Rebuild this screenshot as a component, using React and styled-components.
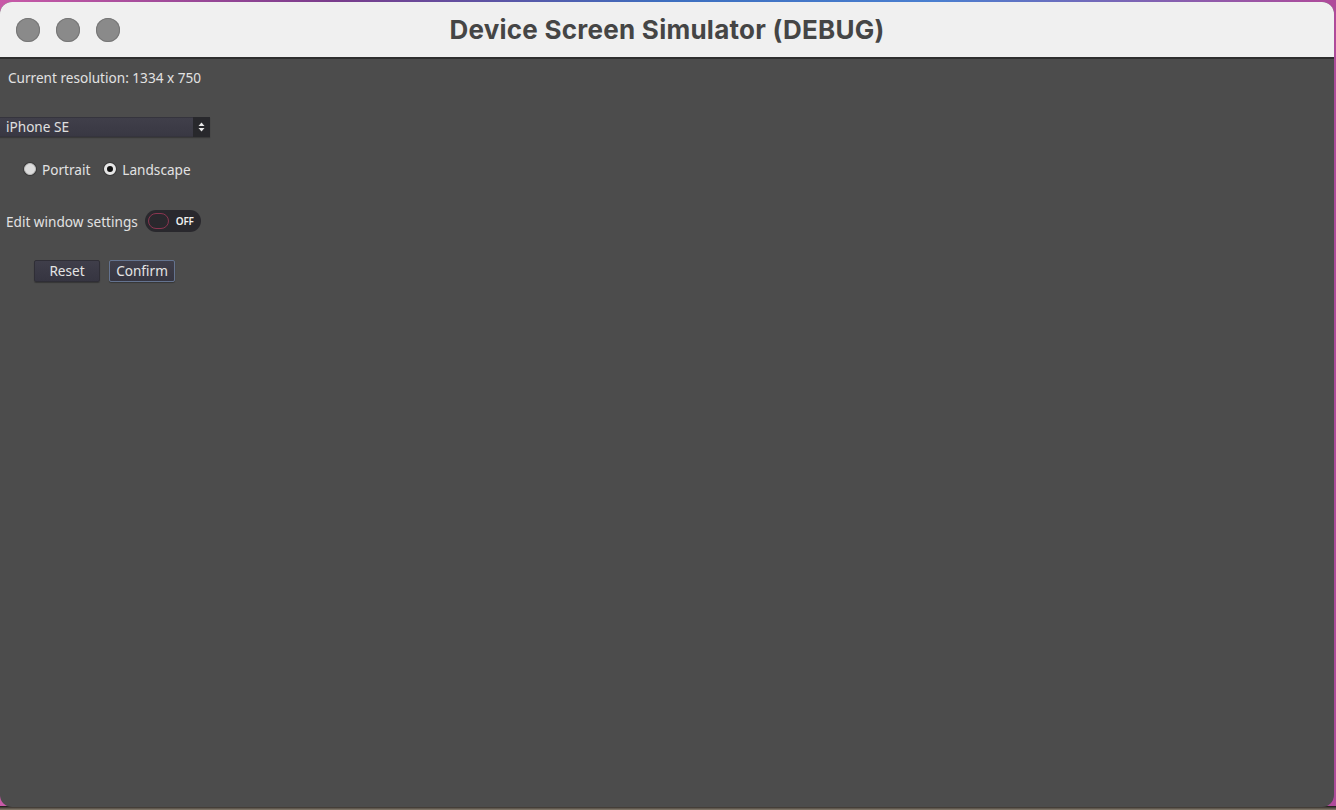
import React from 'react';
import styled, { createGlobalStyle } from 'styled-components';

const Global = createGlobalStyle`
  html, body { margin: 0; padding: 0; }
  body {
    width: 1336px;
    height: 810px;
    overflow: hidden;
    background: #6a3a8a;
  }
`;

const Desk = styled.div`
  width: 1336px;
  height: 810px;
  padding-top: 2px;
  box-sizing: border-box;
  background:
    linear-gradient(180deg, transparent 0, transparent 806px, #1a1616 806px, #8a8070 100%),
    linear-gradient(90deg, #c85aa8 0%, #7a3c8c 25%, #3d6fc0 50%, #4a7fd0 70%, #b04a9a 100%);
`;

const Window = styled.div`
  width: 1334px;
  height: 805px;
  border-radius: 12px;
  overflow: hidden;
  display: flex;
  flex-direction: column;
  background: #4c4c4c;
`;

const TitleBar = styled.div`
  height: 55px;
  flex-shrink: 0;
  background: #f0f0f0;
  border-bottom: 2px solid #2e2e2e;
  display: flex;
  align-items: center;
  position: relative;
  padding-left: 16px;
  gap: 16px;
`;

const Light = styled.div`
  width: 24px;
  height: 24px;
  border-radius: 50%;
  background: #8a8a8a;
  box-shadow: inset 0 0 0 1px #777;
  box-sizing: border-box;
`;

const Title = styled.div`
  position: absolute;
  inset: 0;
  display: flex;
  align-items: center;
  justify-content: center;
  font-family: Inter, "Liberation Sans", sans-serif;
  font-weight: 700;
  font-size: 26px;
  color: #454545;
  letter-spacing: 0.25px;
  pointer-events: none;
`;

const Content = styled.div`
  flex: 1;
  display: flex;
  flex-direction: column;
  align-items: flex-start;
  padding-top: 10px;
  font-family: "Noto Sans", "DejaVu Sans", sans-serif;
  font-size: 13.6px;
  color: #e2e2e2;
`;

const Resolution = styled.div`
  line-height: 17px;
  padding-left: 8px;
`;

const Select = styled.div`
  margin-top: 31px;
  width: 210px;
  height: 20px;
  display: flex;
  box-shadow: 0 1px 1px rgba(0, 0, 0, 0.25);
`;

const SelectValue = styled.div`
  flex: 1;
  background: linear-gradient(180deg, #403f4a, #393843);
  border-top: 1px solid #35343d;
  border-bottom: 1px solid #35343d;
  display: flex;
  align-items: center;
  padding-left: 6px;
  color: #e0e0e0;
  line-height: 18px;
`;

const SelectArrow = styled.div`
  width: 17px;
  background: #28282c;
  display: flex;
  align-items: center;
  justify-content: center;
`;

const RadioRow = styled.div`
  margin-top: 24px;
  display: flex;
  align-items: center;
  padding-left: 24px;
  height: 16px;
`;

const RadioItem = styled.div`
  display: flex;
  align-items: center;
  gap: 6px;
  margin-right: ${p => p.$gap || 0}px;
`;

const RadioDot = styled.div`
  width: 12px;
  height: 12px;
  border-radius: 50%;
  box-sizing: border-box;
  background: ${p => (p.$on ? '#111' : '#dcdcdc')};
  border: ${p => (p.$on ? '3px solid #e6e6e6' : '1px solid #bdbdbd')};
  box-shadow: 0 0 0 1px rgba(0, 0, 0, 0.25);
`;

const ToggleRow = styled.div`
  margin-top: 33px;
  display: flex;
  align-items: center;
  padding-left: 6px;
  gap: 7px;
  height: 22px;
`;

const Toggle = styled.div`
  width: 56px;
  height: 22px;
  border-radius: 11px;
  background: #29282d;
  display: flex;
  align-items: center;
  padding-left: 3px;
  box-sizing: border-box;
  gap: 7px;
`;

const Knob = styled.div`
  width: 21px;
  height: 16px;
  border-radius: 8px;
  border: 1.5px solid #8a3550;
  box-sizing: border-box;
`;

const ToggleLabel = styled.span`
  font-size: 10px;
  font-weight: 600;
  color: #f0f0f0;
  letter-spacing: -0.2px;
`;

const ButtonRow = styled.div`
  margin-top: 28px;
  padding-left: 34px;
  display: flex;
  gap: 9px;
`;

const Button = styled.div`
  width: 66px;
  height: 22px;
  box-sizing: border-box;
  border-radius: 2px;
  display: flex;
  align-items: center;
  justify-content: center;
  padding-bottom: 1px;
  color: #e4e4e4;
  background: linear-gradient(180deg, #3f3e4a, #363541);
  border: 1px solid ${p => (p.$focus ? '#64738f' : '#2f2e36')};
  box-shadow: 0 1px 1px rgba(0, 0, 0, 0.3);
`;

export default function App() {
  return (
    <>
      <Global />
      <Desk>
        <Window>
          <TitleBar>
            <Light />
            <Light />
            <Light />
            <Title>Device Screen Simulator (DEBUG)</Title>
          </TitleBar>
          <Content>
            <Resolution>Current resolution: 1334 x 750</Resolution>
            <Select>
              <SelectValue>iPhone SE</SelectValue>
              <SelectArrow>
                <svg width="7" height="10" viewBox="0 0 7 10">
                  <path d="M3.5 0.5 L6.5 4 H0.5 Z" fill="#e8e8e8" />
                  <path d="M0.5 6 H6.5 L3.5 9.5 Z" fill="#e8e8e8" />
                </svg>
              </SelectArrow>
            </Select>
            <RadioRow>
              <RadioItem $gap={14}>
                <RadioDot />
                <span>Portrait</span>
              </RadioItem>
              <RadioItem>
                <RadioDot $on />
                <span>Landscape</span>
              </RadioItem>
            </RadioRow>
            <ToggleRow>
              <span>Edit window settings</span>
              <Toggle>
                <Knob />
                <ToggleLabel>OFF</ToggleLabel>
              </Toggle>
            </ToggleRow>
            <ButtonRow>
              <Button>Reset</Button>
              <Button $focus>Confirm</Button>
            </ButtonRow>
          </Content>
        </Window>
      </Desk>
    </>
  );
}
